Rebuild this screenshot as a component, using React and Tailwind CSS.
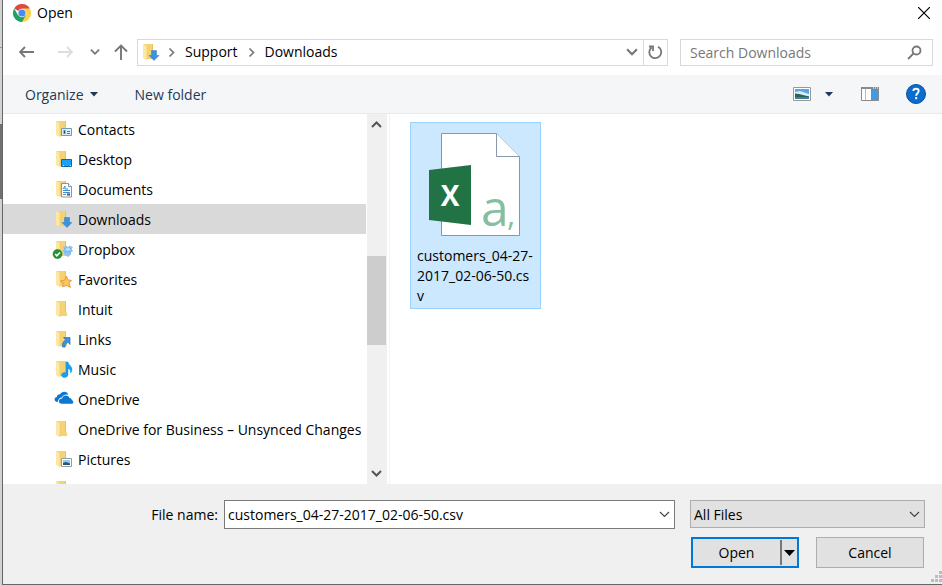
import React from "react";

function Folder({ children }) {
  return (
    <svg width="20" height="18" viewBox="0 0 20 18" className="shrink-0 overflow-visible" aria-hidden="true">
      <path d="M3 1h9v11l1 1v3H3z" fill="#f5d274" />
      <path d="M11 1h1v11h-1z" fill="#e8c261" />
      <path d="M2 1l4 2v14l-4-2z" fill="#fde7a4" />
      <path d="M6 3v14" stroke="#efc965" strokeWidth=".6" />
      {children}
    </svg>
  );
}

function DownloadArrow() {
  return <path d="M10.500 7.500h5v5h2.500l-5 5-5-5h2.500z" fill="#3b92e0" stroke="#2b7fcb" strokeWidth=".5" />;
}

const overlays = {
  plain: null,
  download: <DownloadArrow />,
  contacts: (
    <g>
      <path d="M7.500 8.500h10v7h-10z" fill="#dceef8" stroke="#6c9cb8" />
      <path d="M9 10h3v4H9z" fill="#8fb9cf" />
      <path d="M10 10.500h1v3h-1z" fill="#23506d" />
      <path d="M13 11.500h3M13 13.500h3" stroke="#49809f" />
    </g>
  ),
  desktop: (
    <g>
      <path d="M7.500 9.500h10v7h-10z" fill="#1ba1f5" stroke="#0b66ad" />
      <path d="M9 15.500h1m6 0h1" stroke="#d0ecff" />
    </g>
  ),
  documents: (
    <g>
      <path d="M7.500 3.500h7l3 3v10.500h-10z" fill="#fbfdff" stroke="#8a949c" />
      <path d="M14.500 3.500v3h3" fill="#fff" stroke="#8a949c" />
      <path d="M9 9l2-3v3h3M9 10.500h7M9 12.500h7" fill="none" stroke="#3b8fd0" />
      <path d="M9 14.500h3" stroke="#7a8894" />
      <path d="M13 13.500h3v2h-3z" fill="#315a78" />
    </g>
  ),
  dropbox: (
    <g>
      <path d="M9 7l3.500-1.500L14 7.500l1.500-2L19 7l-1.500 2 1.500 2-2 1.500v2L14 17l-4-2.500v-2L8 11l2-2z" fill="#8ec5f3" />
      <path d="M10 9l4-1.500L17.500 9 14 11.500zM10 12l4 .5 3-.5" fill="#c4e2fa" stroke="#67a9e4" strokeWidth=".6" />
      <circle cx="3.500" cy="14" r="4.500" fill="#259532" stroke="#157420" strokeWidth=".6" />
      <path d="M1.200 14l1.600 1.800L6 12.500" fill="none" stroke="#fff" strokeWidth="1.600" />
    </g>
  ),
  favorites: (
    <path d="M12.500 6l1.300 3.800 3.700.7-2.500 2.500 1.500 4.500-4-2-4 1.200.7-3.700L6.500 11l4.200-.9z" fill="#ffc55c" stroke="#d98e35" strokeWidth=".8" />
  ),
  links: (
    <path d="M9.500 7.500H16v7l-2-2.200c-2 1-3 2.700-2.800 4.700H8.500c-.7-3 .7-5.700 3.200-7.300z" fill="#3b92e0" stroke="#246fae" strokeWidth=".7" />
  ),
  music: (
    <path d="M12 2h2c.3 3 4 4 4 7.500 0 1.500-.6 2.500-1.500 3.500.3-2.500-.5-3.800-2.500-4.500v6c0 1.800-1.500 3-3.500 3S7.500 16.400 7.500 15s1.500-2.500 3.200-2.500c.5 0 .9.100 1.300.2z" fill="#18a0ee" stroke="#0783d0" strokeWidth=".4" />
  ),
  pictures: (
    <g>
      <path d="M7.500 8.500h10v8h-10z" fill="#fff" stroke="#929ba3" />
      <path d="M9 10h7v5H9z" fill="#8fcbf5" />
      <path d="M9 13l3-1 4 1.500V15H9z" fill="#29566c" />
    </g>
  ),
};

function OneDrive() {
  return (
    <svg width="20" height="18" viewBox="0 0 20 18" className="shrink-0 overflow-visible" aria-hidden="true">
      <path d="M3.800 12C1.800 12 .6 11 .6 9.500c0-1.500 1-2.400 2.300-2.600C3.100 5 4.600 4.100 6 4.400 6.900 2.600 8.400 1.700 10.300 1.700c2.100 0 3.500 1 4.100 2.900-3-.6-5.400.5-6.300 2.700C5.500 7.500 4.100 9.400 3.800 12z" fill="#0878d4" />
      <path d="M7.600 13.800c-1.600 0-2.700-1-2.700-2.500 0-1.700 1.200-2.800 3.200-2.800.5-2 1.900-3.100 3.800-3.100 1.800 0 3.100 1 3.600 2.700 1.400 0 2.200.8 2.300 2.100 1 .2 1.500.8 1.500 1.700 0 1.200-.8 1.900-2 1.900z" fill="#0878d4" stroke="#fff" strokeWidth="1" paintOrder="stroke" />
    </svg>
  );
}

function Chevron({ dir = "down", className = "", size = 11, width = 2 }) {
  const d = { down: "M1 3l4.500 4.500L10 3", up: "M1 8l4.500-4.500L10 8", right: "M3.500 1.500l4 4-4 4" }[dir];
  return (
    <svg width={size} height={size} viewBox="0 0 11 11" className={className} fill="none" stroke="currentColor" strokeWidth={width} aria-hidden="true">
      <path d={d} />
    </svg>
  );
}

function Chrome() {
  return (
    <svg width="18" height="18" viewBox="0 0 18 18" aria-hidden="true">
      <path d="M9 9L1.200 4.500A9 9 0 0 1 16.800 4.500z" fill="#dd4b3e" />
      <path d="M9 9V4.500h7.800A9 9 0 0 1 9 18z" fill="#fdd149" />
      <path d="M9 9l3.900 2.200L9 18A9 9 0 0 1 1.200 4.500l3.900 6.700z" fill="#1ea362" />
      <circle cx="9" cy="9" r="4.300" fill="#f1f1f1" />
      <circle cx="9" cy="9" r="3.500" fill="#4a8af4" />
    </svg>
  );
}

function CsvIcon() {
  return (
    <svg width="92" height="105" viewBox="0 0 92 105" className="overflow-visible" aria-hidden="true">
      <path d="M12.500 .5h55l23 23v79h-78z" fill="#fff" stroke="#8497ab" />
      <path d="M67.500 .5v23h23" fill="#fff" stroke="#8497ab" />
      <path d="M0 37l42-5v60L0 87z" fill="#217346" />
      <text x="21" y="73" textAnchor="middle" className="font-['Open_Sans',sans-serif] text-[28px] font-bold" fill="#fff">X</text>
      <text x="52" y="93" className="font-['Open_Sans',sans-serif] text-[50px] font-medium" fill="#86bf9f">a</text>
      <text x="78" y="93" className="font-['Open_Sans',sans-serif] text-[32px] font-medium" fill="#86bf9f">,</text>
    </svg>
  );
}

const folders = [
  ["Contacts", "contacts"],
  ["Desktop", "desktop"],
  ["Documents", "documents"],
  ["Downloads", "download"],
  ["Dropbox", "dropbox"],
  ["Favorites", "favorites"],
  ["Intuit", "plain"],
  ["Links", "links"],
  ["Music", "music"],
  ["OneDrive", "onedrive"],
  ["OneDrive for Business – Unsynced Changes", "plain"],
  ["Pictures", "pictures"],
  ["", "plain"],
];

function TitleBar() {
  return (
    <header className="flex h-[26px] items-center justify-between pl-2.5 pr-3">
      <h1 className="flex items-center gap-1.5">
        <Chrome />
        Open
      </h1>
      <button aria-label="Close">
        <svg width="12" height="12" viewBox="0 0 12 12" stroke="#000" strokeWidth="1.200" aria-hidden="true">
          <path d="M0 0l12 12M12 0L0 12" />
        </svg>
      </button>
    </header>
  );
}

function NavBar() {
  return (
    <nav className="mt-[13px] flex h-[26px] items-center pl-4 pr-[9px] text-[#777]">
      <button aria-label="Back" className="w-[38px]">
        <svg width="16" height="12" viewBox="0 0 16 12" fill="none" stroke="#777" strokeWidth="1.800" aria-hidden="true"><path d="M6 1L1 6l5 5M1 6h14" /></svg>
      </button>
      <button aria-label="Forward" className="w-[33px]">
        <svg width="16" height="12" viewBox="0 0 16 12" fill="none" stroke="#ddd" strokeWidth="1.800" aria-hidden="true"><path d="M10 1l5 5-5 5M15 6H1" /></svg>
      </button>
      <button aria-label="Recent locations" className="w-6"><Chevron size={10} /></button>
      <button aria-label="Up" className="w-[23px]">
        <svg width="14" height="16" viewBox="0 0 14 16" fill="none" stroke="#777" strokeWidth="1.900" aria-hidden="true"><path d="M1 7.500L7 1.500l6 6M7 2v14" /></svg>
      </button>
      <div className="flex h-[27px] min-w-0 flex-1 items-center border border-[#d9d9d9] pl-[3px]">
        <Folder><DownloadArrow /></Folder>
        <Chevron dir="right" width={1.7} className="ml-[5px] mr-2" />
        <button className="text-black">Support</button>
        <Chevron dir="right" width={1.7} className="mx-2" />
        <button className="text-black">Downloads</button>
        <button aria-label="Previous locations" className="ml-auto px-[5px]"><Chevron size={12} /></button>
        <button aria-label="Refresh" className="flex h-full w-6 items-center justify-center border-l border-[#d9d9d9]">
          <svg width="15" height="16" viewBox="0 0 15 16" fill="none" stroke="#777" strokeWidth="1.800" aria-hidden="true"><path d="M10 2.800A6 6 0 1 1 3.500 3.500M1 2.500h4v4.500" /></svg>
        </button>
      </div>
      <div className="ml-3 flex h-[27px] w-[253px] items-center border border-[#d9d9d9] pl-[9px] pr-2.5">
        <input type="search" aria-label="Search Downloads" placeholder="Search Downloads" className="min-w-0 flex-1 pt-px outline-none placeholder:text-[#777]" />
        <svg width="15" height="15" viewBox="0 0 15 15" fill="none" stroke="#777" strokeWidth="1.800" aria-hidden="true"><circle cx="9.500" cy="5.500" r="4" /><path d="M6.500 8.500L1 14" /></svg>
      </div>
    </nav>
  );
}

function Toolbar() {
  return (
    <div className="mt-[10px] flex h-[39px] items-center border-b border-[#e8e9ea] bg-[#f5f6f7] pl-[22px] pr-4 text-[#1e395b]">
      <button className="flex items-center gap-1.5">
        <span className="pt-0.5">Organize</span>
        <svg width="8" height="5" viewBox="0 0 8 5" aria-hidden="true"><path d="M0 0h8L4 4.500z" fill="#1e395b" /></svg>
      </button>
      <button className="ml-[37px] pt-0.5">New folder</button>
      <button aria-label="View" className="ml-auto">
        <svg width="18" height="14" viewBox="0 0 18 14" aria-hidden="true">
          <path d="M.5.500h17v13H.5z" fill="#fff" stroke="#999" />
          <path d="M2 2h14v10H2z" fill="#5aa5e4" />
          <path d="M2 5l5-1 9 3v2H2z" fill="#d5eefa" />
          <path d="M2 6.500l4 .5 10 2.500v1H2z" fill="#2d6350" />
          <path d="M2 10h14v2H2z" fill="#3f7fa8" />
        </svg>
      </button>
      <button aria-label="More view options" className="ml-3.5">
        <svg width="8" height="5" viewBox="0 0 8 5" aria-hidden="true"><path d="M0 0h8L4 4.500z" fill="#1e395b" /></svg>
      </button>
      <button aria-label="Preview pane" className="ml-7">
        <svg width="18" height="14" viewBox="0 0 18 14" aria-hidden="true">
          <path d="M.5.500h17v13H.5z" fill="#fff" stroke="#8a8a8a" />
          <path d="M0 0h18v2H0z" fill="#8a8a8a" />
          <path d="M12 1h1m1 0h1m1 0h1" stroke="#fff" />
          <path d="M4.500 2v11" stroke="#bbb" />
          <path d="M10 2h7v11h-7z" fill="#419be4" />
        </svg>
      </button>
      <button aria-label="Help" className="ml-[27px]">
        <svg width="20" height="20" viewBox="0 0 20 20" aria-hidden="true">
          <circle cx="10" cy="10" r="9.500" fill="#0a6cce" stroke="#07539f" />
          <path d="M7.300 7C7.400 5.500 8.500 4.800 10 4.800c1.700 0 2.700.9 2.700 2.300 0 2-2.500 2.300-2.500 4.700" fill="none" stroke="#fff" strokeWidth="1.900" />
          <path d="M9.200 13h2v2.200h-2z" fill="#fff" />
        </svg>
      </button>
    </div>
  );
}

function FolderTree() {
  return (
    <aside className="flex w-[384px] shrink-0">
      <ul className="min-w-0 flex-1 overflow-hidden">
        {folders.map(([name, icon], i) => (
          <li key={i} className={name === "Downloads" ? "mr-px bg-[#d9d9d9]" : "mr-px"}>
            <button className="flex h-[30px] w-full items-center gap-1 whitespace-nowrap pl-[51px]" aria-label={name || "Folder"}>
              {icon === "onedrive" ? <OneDrive /> : <Folder>{overlays[icon]}</Folder>}
              <span className="pt-0.5">{name}</span>
            </button>
          </li>
        ))}
      </ul>
      <div className="flex w-5 flex-col items-start bg-[#f0f0f0] text-[#555]">
        <button aria-label="Scroll up" className="flex h-[21px] items-center px-1"><Chevron dir="up" width={2} /></button>
        <div className="flex w-full flex-1 flex-col pt-[121px]">
          <div className="h-[89px] w-[19px] bg-[#cdcdcd]" />
        </div>
        <button aria-label="Scroll down" className="flex h-[21px] items-center px-1"><Chevron width={2} /></button>
      </div>
    </aside>
  );
}

function FileGrid() {
  return (
    <main className="ml-0.5 flex-1 border-l border-[#f4f4f4] pl-5 pt-2">
      <button className="flex w-[131px] flex-col items-start border border-[#99d1ff] bg-[#cce8ff] px-1.5 pb-0.5 pt-2.5 text-left leading-5">
        <span className="pl-3"><CsvIcon /></span>
        <span className="mt-2 w-full break-all">customers_04-27-2017_02-06-50.csv</span>
      </button>
    </main>
  );
}

function Footer() {
  return (
    <footer className="relative flex h-[101px] flex-col gap-2 border-b border-[#666] bg-[#f0f0f0] pr-[17px] pt-4">
      <div className="flex items-start">
        <label htmlFor="file" className="w-[221px] pr-1.5 pt-px text-right leading-7">File name:</label>
        <div className="flex h-[29px] flex-1 items-center border border-[#7a7a7a] bg-white pl-[3px] pr-1">
          <input id="file" defaultValue="customers_04-27-2017_02-06-50.csv" className="min-w-0 flex-1 outline-none" />
          <button aria-label="Previous file names"><Chevron width={1.2} className="text-[#444]" /></button>
        </div>
        <div className="relative ml-[15px] w-[235px]">
          <select aria-label="File type" className="h-7 w-full appearance-none border border-[#adadad] bg-[#e1e1e1] pl-[3px] pr-6 pt-0.5">
            <option>All Files</option>
          </select>
          <Chevron width={1.2} className="pointer-events-none absolute right-[5px] top-[9px] text-[#444]" />
        </div>
      </div>
      <div className="flex justify-end gap-[17px] pr-px">
        <div className="flex h-[31px] w-[108px] border-2 border-[#0078d7] bg-[#e1e1e1]">
          <button className="flex-1">Open</button>
          <button aria-label="Open options" className="my-px flex w-[17px] items-center justify-center border-l-2 border-[#777]">
            <svg width="11" height="6" viewBox="0 0 11 6" aria-hidden="true"><path d="M0 0h11L5.500 6z" /></svg>
          </button>
        </div>
        <button className="h-[31px] w-[108px] border border-[#adadad] bg-[#e1e1e1]">Cancel</button>
      </div>
      <svg width="11" height="11" viewBox="0 0 11 11" className="absolute bottom-0.5 right-0" fill="#bcbcbc" aria-hidden="true">
        <path d="M8 0h3v3H8zM4 4h3v3H4zM8 4h3v3H8zM0 8h3v3H0zM4 8h3v3H4zM8 8h3v3H8z" />
      </svg>
    </footer>
  );
}

export default function App() {
  return (
    <div className="flex h-screen font-['Open_Sans','Noto_Sans',sans-serif] text-sm text-black">
      <div className="flex w-0.5 shrink-0 flex-col bg-[#d2d2d2] pt-[47px]">
        <div className="h-px bg-[#999]" />
        <div className="mt-[76px] h-[75px] bg-[#707070]" />
      </div>
      <div className="flex min-w-0 flex-1 flex-col border-l border-[#666] bg-white">
        <TitleBar />
        <NavBar />
        <Toolbar />
        <div className="flex min-h-0 flex-1 overflow-hidden">
          <FolderTree />
          <FileGrid />
        </div>
        <Footer />
      </div>
    </div>
  );
}
